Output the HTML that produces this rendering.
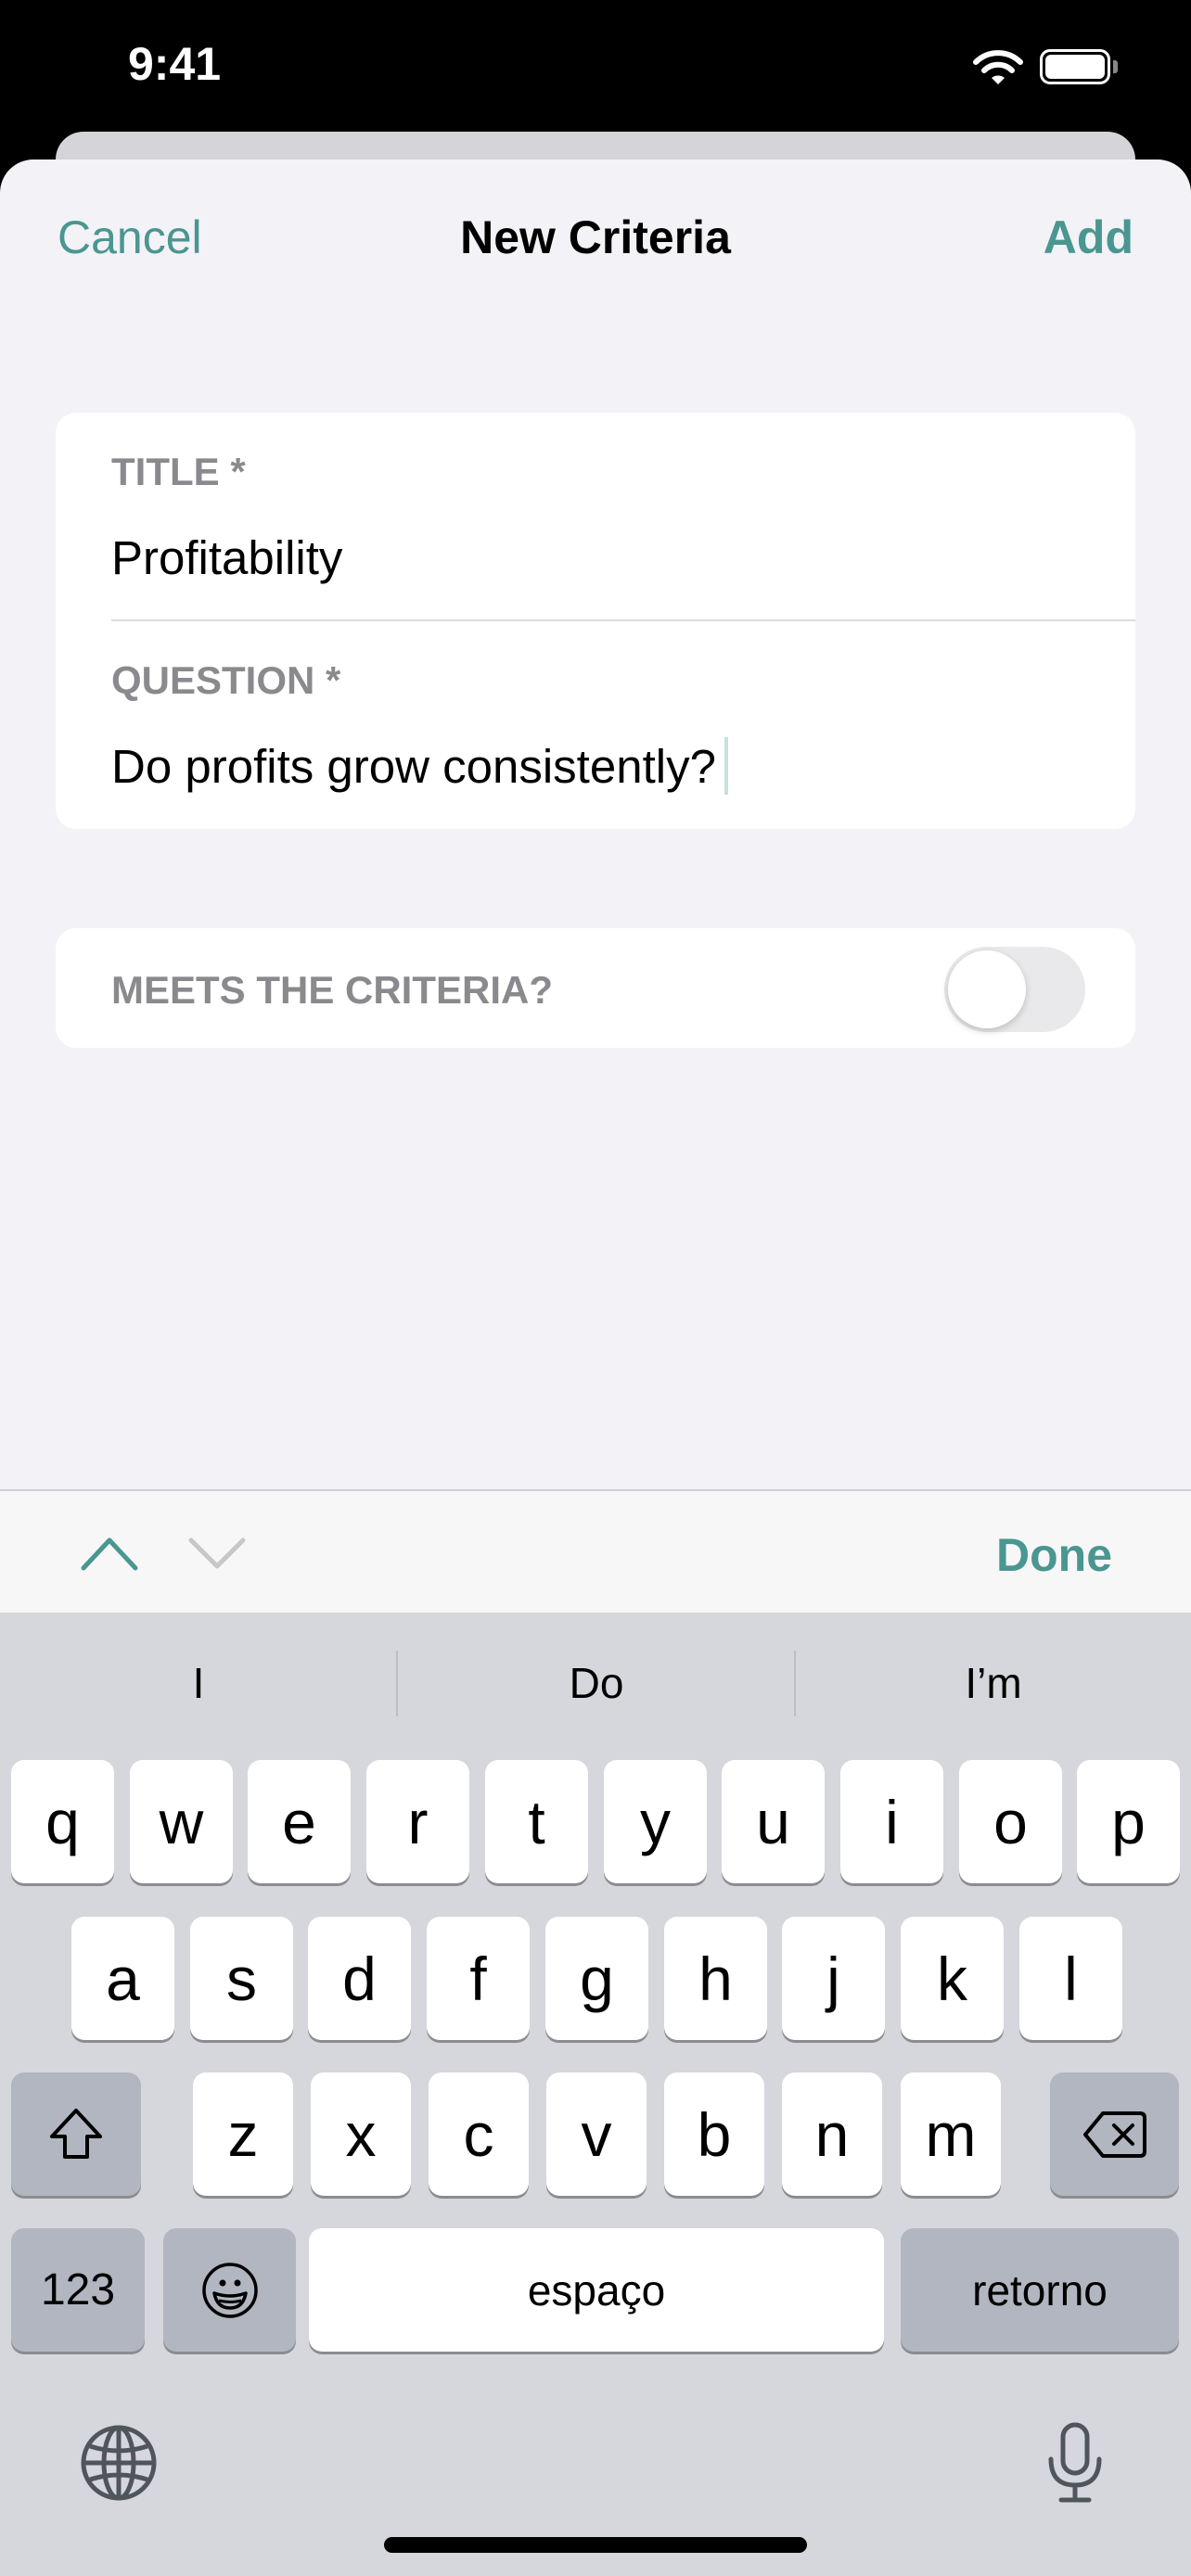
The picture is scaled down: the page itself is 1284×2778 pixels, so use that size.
<!DOCTYPE html>
<html><head><meta charset="utf-8"><style>
*{margin:0;padding:0;box-sizing:border-box}
body{width:1284px;height:2778px;position:relative;overflow:hidden;background:#000;font-family:"Liberation Sans",sans-serif}
.a{position:absolute}
.k{position:absolute;background:#fff;border-radius:14px;box-shadow:0 3px 0 #8b8c90;display:flex;align-items:center;justify-content:center;font-size:66px;color:#000;height:133px}
.s{background:#b1b6c0}
.teal{color:#4a9690}
.lbl{font-size:42px;font-weight:600;color:#8a8a8e}
</style></head><body>
<div class="a" style="left:138px;top:40px;font-size:50px;font-weight:bold;color:#fff">9:41</div>
<svg class="a" style="left:1048px;top:52px" width="56" height="42" viewBox="0 0 56 42"><path d="M4 15 A34 34 0 0 1 52 15" fill="none" stroke="#fff" stroke-width="6" stroke-linecap="round"/><path d="M13 24 A21 21 0 0 1 43 24" fill="none" stroke="#fff" stroke-width="6" stroke-linecap="round"/><path d="M21 32 L28 39 L35 32 A11 11 0 0 0 21 32Z" fill="#fff"/></svg>
<div class="a" style="left:1121px;top:53px;width:76px;height:38px;border:3px solid #fff;border-radius:11px;padding:3px"><div style="background:#fff;width:100%;height:100%;border-radius:6px"></div></div>
<div class="a" style="left:1200px;top:65px;width:5px;height:14px;background:#888;border-radius:0 3px 3px 0"></div>
<div class="a" style="left:60px;top:142px;width:1164px;height:80px;background:#d4d4d9;border-radius:30px 30px 0 0"></div>
<div class="a" style="left:0;top:172px;width:1284px;height:1434px;background:#f2f2f7;border-radius:36px 36px 0 0"></div>
<div class="a teal" style="left:62px;top:227px;font-size:50px">Cancel</div>
<div class="a" style="left:0;width:1284px;text-align:center;top:227px;font-size:50px;font-weight:bold">New Criteria</div>
<div class="a teal" style="right:62px;top:227px;font-size:50px;font-weight:bold">Add</div>
<div class="a" style="left:60px;top:445px;width:1164px;height:449px;background:#fff;border-radius:22px"></div>
<div class="a lbl" style="left:120px;top:485px">TITLE *</div>
<div class="a" style="left:120px;top:572px;font-size:51px">Profitability</div>
<div class="a" style="left:120px;top:668px;width:1104px;height:2px;background:#dcdcde"></div>
<div class="a lbl" style="left:120px;top:710px">QUESTION *</div>
<div class="a" style="left:120px;top:797px;font-size:51px">Do profits grow consistently?</div>
<div class="a" style="left:781px;top:795px;width:4px;height:62px;background:#c8e0dd"></div>
<div class="a" style="left:60px;top:1001px;width:1164px;height:129px;background:#fff;border-radius:22px"></div>
<div class="a lbl" style="left:120px;top:1044px">MEETS THE CRITERIA?</div>
<div class="a" style="left:1018px;top:1021px;width:152px;height:92px;background:#e9e9eb;border-radius:46px"></div>
<div class="a" style="left:1022px;top:1025px;width:84px;height:84px;background:#fff;border-radius:42px;box-shadow:0 3px 8px rgba(0,0,0,.18)"></div>
<div class="a" style="left:0;top:1606px;width:1284px;height:133px;background:#f7f7f7;border-top:2px solid #d0d0d3"></div>
<svg class="a" style="left:86px;top:1655px" width="64" height="40"><path d="M4 36 L32 6 L60 36" fill="none" stroke="#4a9690" stroke-width="5" stroke-linecap="round" stroke-linejoin="round"/></svg>
<svg class="a" style="left:202px;top:1655px" width="64" height="40"><path d="M4 6 L32 34 L60 6" fill="none" stroke="#c7c7c9" stroke-width="5" stroke-linecap="round" stroke-linejoin="round"/></svg>
<div class="a teal" style="right:85px;top:1648px;font-size:50px;font-weight:bold">Done</div>
<div class="a" style="left:0;top:1739px;width:1284px;height:1039px;background:#d5d7dc"></div>
<div class="a" style="left:427px;top:1780px;width:2px;height:71px;background:#bcbec3"></div>
<div class="a" style="left:856px;top:1780px;width:2px;height:71px;background:#bcbec3"></div>
<div class="a" style="left:114px;width:200px;text-align:center;top:1788px;font-size:46px">I</div>
<div class="a" style="left:543px;width:200px;text-align:center;top:1788px;font-size:46px">Do</div>
<div class="a" style="left:971px;width:200px;text-align:center;top:1788px;font-size:46px">I’m</div>

<div class="k" style="left:12px;top:1898px;width:111px">q</div>
<div class="k" style="left:140px;top:1898px;width:111px">w</div>
<div class="k" style="left:267px;top:1898px;width:111px">e</div>
<div class="k" style="left:395px;top:1898px;width:111px">r</div>
<div class="k" style="left:523px;top:1898px;width:111px">t</div>
<div class="k" style="left:651px;top:1898px;width:111px">y</div>
<div class="k" style="left:778px;top:1898px;width:111px">u</div>
<div class="k" style="left:906px;top:1898px;width:111px">i</div>
<div class="k" style="left:1034px;top:1898px;width:111px">o</div>
<div class="k" style="left:1161px;top:1898px;width:111px">p</div>

<div class="k" style="left:77px;top:2067px;width:111px">a</div>
<div class="k" style="left:205px;top:2067px;width:111px">s</div>
<div class="k" style="left:332px;top:2067px;width:111px">d</div>
<div class="k" style="left:460px;top:2067px;width:111px">f</div>
<div class="k" style="left:588px;top:2067px;width:111px">g</div>
<div class="k" style="left:716px;top:2067px;width:111px">h</div>
<div class="k" style="left:843px;top:2067px;width:111px">j</div>
<div class="k" style="left:971px;top:2067px;width:111px">k</div>
<div class="k" style="left:1099px;top:2067px;width:111px">l</div>

<div class="k s" style="left:12px;top:2235px;width:140px"><svg width="60" height="60" viewBox="0 0 60 60"><path d="M30 4 L4 32 H18 V54 H42 V32 H56 Z" fill="none" stroke="#000" stroke-width="4" stroke-linejoin="round"/></svg></div>
<div class="k" style="left:208px;top:2235px;width:108px">z</div>
<div class="k" style="left:335px;top:2235px;width:108px">x</div>
<div class="k" style="left:462px;top:2235px;width:108px">c</div>
<div class="k" style="left:589px;top:2235px;width:108px">v</div>
<div class="k" style="left:716px;top:2235px;width:108px">b</div>
<div class="k" style="left:843px;top:2235px;width:108px">n</div>
<div class="k" style="left:971px;top:2235px;width:108px">m</div>
<div class="k s" style="left:1132px;top:2235px;width:139px"><svg width="70" height="52" viewBox="0 0 70 52"><path d="M22 3 H62 Q67 3 67 8 V44 Q67 49 62 49 H22 L3 26 Z" fill="none" stroke="#000" stroke-width="4" stroke-linejoin="round"/><path d="M34 16 L54 36 M54 16 L34 36" stroke="#000" stroke-width="4" stroke-linecap="round"/></svg></div>

<div class="k s" style="left:12px;top:2403px;width:144px;font-size:48px">123</div>
<div class="k s" style="left:176px;top:2403px;width:143px"><svg width="64" height="64" viewBox="0 0 64 64"><circle cx="32" cy="32" r="28" fill="none" stroke="#000" stroke-width="3.5"/><circle cx="24" cy="24" r="3.5"/><circle cx="40" cy="24" r="3.5"/><path d="M15 35 Q32 41 49 35 Q46 51 32 51 Q18 51 15 35Z" fill="none" stroke="#000" stroke-width="3.5" stroke-linejoin="round"/><path d="M20 43 Q32 46 44 43" fill="none" stroke="#000" stroke-width="3"/></svg></div>
<div class="k" style="left:333px;top:2403px;width:620px;font-size:46px">espaço</div>
<div class="k s" style="left:971px;top:2403px;width:300px;font-size:46px">retorno</div>

<svg class="a" style="left:86px;top:2614px" width="84" height="84" viewBox="0 0 84 84"><g fill="none" stroke="#50555c" stroke-width="5"><circle cx="42" cy="42" r="38"/><ellipse cx="42" cy="42" rx="16" ry="38"/><path d="M42 4 V80 M4 42 H80 M11 24 Q42 34 73 24 M11 60 Q42 50 73 60"/></g></svg>
<svg class="a" style="left:1128px;top:2612px" width="62" height="88" viewBox="0 0 62 88"><g fill="none" stroke="#50555c" stroke-width="5" stroke-linecap="round"><rect x="18" y="3" width="26" height="52" rx="13"/><path d="M5 40 Q5 68 31 68 Q57 68 57 40 M31 68 V84 M16 84 H46"/></g></svg>
<div class="a" style="left:414px;top:2736px;width:456px;height:17px;background:#000;border-radius:9px"></div>
</body></html>
